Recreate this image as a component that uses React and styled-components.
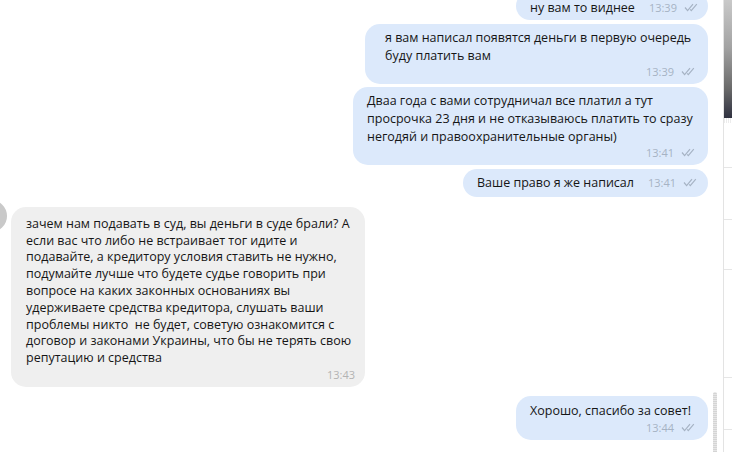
import styled, { createGlobalStyle } from "styled-components";

const GlobalStyle = createGlobalStyle`
  html, body {
    margin: 0;
    padding: 0;
    width: 732px;
    height: 452px;
    overflow: hidden;
    background: #ffffff;
  }
  * {
    box-sizing: border-box;
  }
`;

const Frame = styled.div`
  display: flex;
  width: 732px;
  height: 452px;
  font-family: "Open Sans", "Noto Sans", sans-serif;
  color: #161616;
`;

const Chat = styled.div`
  position: relative;
  flex: 1;
  display: flex;
  flex-direction: column;
  justify-content: flex-end;
  overflow: hidden;
  padding: 0 15px 12px 0;
`;

const Row = styled.div`
  display: flex;
  flex-shrink: 0;
  justify-content: ${(p) => (p.$out ? "flex-end" : "flex-start")};
  align-items: flex-start;
  margin-top: ${(p) => p.$gap}px;
`;

const Avatar = styled.div`
  width: 32px;
  height: 32px;
  border-radius: 50%;
  background: #c9c9c9;
  margin-left: -25px;
  margin-right: 4px;
  margin-top: -7px;
  flex-shrink: 0;
`;

const Bubble = styled.div`
  width: ${(p) => p.$w}px;
  background: ${(p) => (p.$out ? "#dce9fb" : "#efefef")};
  border-radius: 15px;
  padding: ${(p) => p.$pt ?? 5}px ${(p) => (p.$out ? 13 : 10)}px
    ${(p) => p.$pb ?? 5}px ${(p) => p.$pl ?? 14}px;
  display: ${(p) => (p.$inline ? "flex" : "block")};
  align-items: center;
`;

const Text = styled.div`
  font-size: 12.5px;
  line-height: ${(p) => p.$lh ?? 18}px;
  white-space: nowrap;
`;

const Meta = styled.div`
  display: flex;
  align-items: center;
  justify-content: flex-end;
  gap: 7px;
  margin-left: auto;
  padding-left: 14px;
  height: 14px;
  font-size: 11px;
  color: ${(p) => (p.$out ? "#a6b3c4" : "#b3b3b3")};
`;

const Side = styled.div`
  width: 9px;
  flex-shrink: 0;
  border-left: 1px solid #e3e3e3;
  display: flex;
  flex-direction: column;
`;

const Thumb = styled.div`
  height: 118px;
  background: linear-gradient(180deg, #c9c9c9 0%, #a3a3a3 40%, #6a6a6a 75%, #2f3140 100%);
`;

const Dither = styled.div`
  height: 5px;
  background: repeating-linear-gradient(90deg, #ececec 0 1px, #ffffff 1px 2px);
`;

const SideRow = styled.div`
  height: ${(p) => p.$h}px;
  border-bottom: 1px solid #e6e6e6;
  flex-shrink: 0;
`;

const Scrollbar = styled.div`
  position: absolute;
  right: 6px;
  top: 392px;
  bottom: 0;
  width: 4px;
  border-radius: 2px 2px 0 0;
  background: repeating-linear-gradient(0deg, #d4d4d4 0 1px, #e6e6e6 1px 2px);
`;

const Checks = ({ color = "#a6b3c4" }) => (
  <svg width="14" height="9" viewBox="0 0 14 9" fill="none">
    <polyline points="1,4.5 3.6,7.6 9,1.2" stroke={color} strokeWidth="1.2" />
    <polyline points="6.2,6.4 7.3,7.6 12.8,1.2" stroke={color} strokeWidth="1.2" />
  </svg>
);

const Time = ({ out, children }) => (
  <Meta $out={out}>
    <span>{children}</span>
    {out && <Checks />}
  </Meta>
);

const App = () => {
  return (
    <Frame>
      <GlobalStyle />
      <Chat>
        <Row $out $gap={0}>
          <Bubble $out $inline $w={192} $pt={7} $pb={3}>
            <Text>ну вам то виднее</Text>
            <Time out>13:39</Time>
          </Bubble>
        </Row>
        <Row $out $gap={4}>
          <Bubble $out $w={343} $pl={20}>
            <Text>
              я вам написал появятся деньги в первую очередь
              <br />
              буду платить вам
            </Text>
            <Time out>13:39</Time>
          </Bubble>
        </Row>
        <Row $out $gap={3}>
          <Bubble $out $w={355}>
            <Text>
              Дваа года с вами сотрудничал все платил а тут
              <br />
              просрочка 23 дня и не отказываюсь платить то сразу
              <br />
              негодяй и правоохранительные органы)
            </Text>
            <Time out>13:41</Time>
          </Bubble>
        </Row>
        <Row $out $gap={4}>
          <Bubble $out $inline $w={245}>
            <Text>Ваше право я же написал</Text>
            <Time out>13:41</Time>
          </Bubble>
        </Row>
        <Row $gap={10}>
          <Avatar />
          <Bubble $w={354} $pt={9} $pb={6} $pl={15}>
            <Text $lh={16.8}>
              зачем нам подавать в суд, вы деньги в суде брали? А
              <br />
              если вас что либо не встраивает тог идите и
              <br />
              подавайте, а кредитору условия ставить не нужно,
              <br />
              подумайте лучше что будете судье говорить при
              <br />
              вопросе на каких законных основаниях вы
              <br />
              удерживаете средства кредитора, слушать ваши
              <br />
              проблемы никто&nbsp; не будет, советую ознакомится с
              <br />
              договор и законами Украины, что бы не терять свою
              <br />
              репутацию и средства
            </Text>
            <Time>13:43</Time>
          </Bubble>
        </Row>
        <Row $out $gap={9}>
          <Bubble $out $w={192} $pt={6} $pb={6}>
            <Text>Хорошо, спасибо за совет!</Text>
            <Time out>13:44</Time>
          </Bubble>
        </Row>
        <Scrollbar />
      </Chat>
      <Side>
        <Thumb />
        <Dither />
        <SideRow $h={45} />
        <SideRow $h={52} />
        <SideRow $h={50} />
        <SideRow $h={108} />
        <SideRow $h={52} />
      </Side>
    </Frame>
  );
};

export default App;
